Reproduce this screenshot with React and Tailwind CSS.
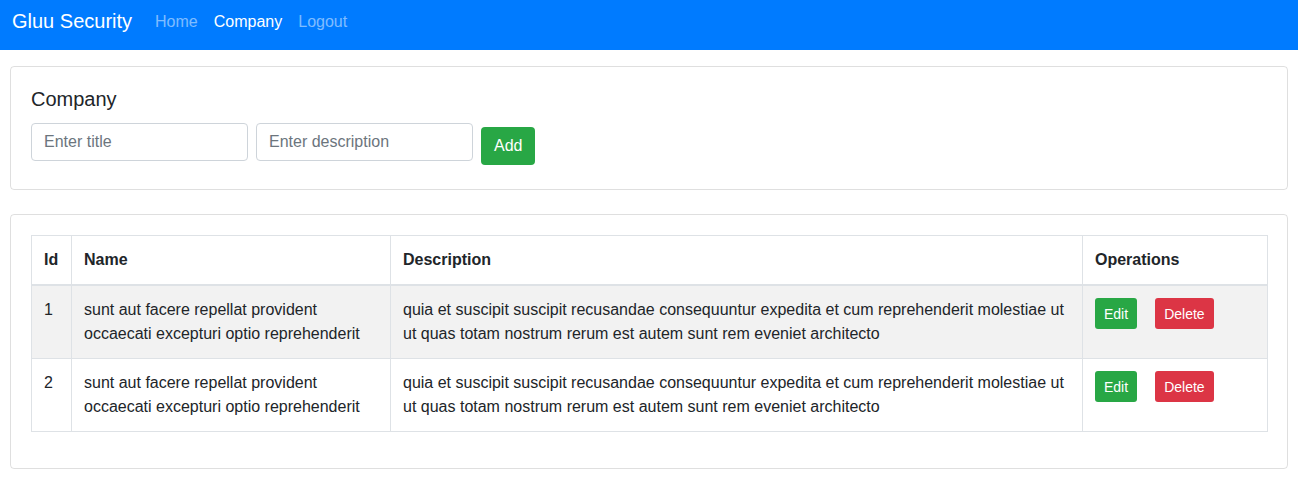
const rows = [
  {
    id: 1,
    name: "sunt aut facere repellat provident occaecati excepturi optio reprehenderit",
    description:
      "quia et suscipit suscipit recusandae consequuntur expedita et cum reprehenderit molestiae ut ut quas totam nostrum rerum est autem sunt rem eveniet architecto",
  },
  {
    id: 2,
    name: "sunt aut facere repellat provident occaecati excepturi optio reprehenderit",
    description:
      "quia et suscipit suscipit recusandae consequuntur expedita et cum reprehenderit molestiae ut ut quas totam nostrum rerum est autem sunt rem eveniet architecto",
  },
];

function Navbar() {
  return (
    <nav className="h-[50px] bg-[#007bff] flex items-start px-[12px] pt-[6px]">
      <span className="text-[20px] leading-[30px] text-white mr-[15px]">Gluu Security</span>
      <a className="px-[8px] mt-[1px] text-[16px] leading-[30px] text-[rgba(255,255,255,0.5)]">Home</a>
      <a className="px-[8px] mt-[1px] text-[16px] leading-[30px] text-white">Company</a>
      <a className="px-[8px] mt-[1px] text-[16px] leading-[30px] text-[rgba(255,255,255,0.5)]">Logout</a>
    </nav>
  );
}

function AddForm() {
  return (
    <div className="border border-[rgba(0,0,0,0.125)] rounded-[4px] p-[20px]">
      <h5 className="text-[20px] leading-[24px] mb-[12px] text-[#212529]">Company</h5>
      <div className="flex items-start">
        <input
          placeholder="Enter title"
          className="w-[217px] h-[38px] px-[12px] border border-[#ced4da] rounded-[4px] text-[16px] text-[#495057] placeholder:text-[#6c757d] outline-none"
        />
        <input
          placeholder="Enter description"
          className="w-[217px] h-[38px] px-[12px] ml-[8px] border border-[#ced4da] rounded-[4px] text-[16px] text-[#495057] placeholder:text-[#6c757d] outline-none"
        />
        <button className="ml-[8px] my-[4px] h-[38px] px-[13px] bg-[#28a745] text-white text-[16px] rounded-[4px]">
          Add
        </button>
      </div>
    </div>
  );
}

function CompanyTable() {
  return (
    <div className="border border-[rgba(0,0,0,0.125)] rounded-[4px] p-[20px]">
      <table className="w-full table-fixed border-collapse text-[16px] leading-[24px] text-[#212529] mb-[16px]">
        <colgroup>
          <col className="w-[40px]" />
          <col className="w-[319px]" />
          <col className="w-[692px]" />
          <col className="w-[185px]" />
        </colgroup>
        <thead>
          <tr>
            <th className="text-left font-bold p-[12px] border border-[#dee2e6] border-b-2">Id</th>
            <th className="text-left font-bold p-[12px] border border-[#dee2e6] border-b-2">Name</th>
            <th className="text-left font-bold p-[12px] border border-[#dee2e6] border-b-2">Description</th>
            <th className="text-left font-bold p-[12px] border border-[#dee2e6] border-b-2">Operations</th>
          </tr>
        </thead>
        <tbody>
          {rows.map((r, i) => (
            <tr key={r.id} className={i % 2 === 0 ? "bg-[rgba(0,0,0,0.05)]" : ""}>
              <td className="align-top p-[12px] border border-[#dee2e6]">{r.id}</td>
              <td className="align-top p-[12px] border border-[#dee2e6]">{r.name}</td>
              <td className="align-top p-[12px] border border-[#dee2e6]">{r.description}</td>
              <td className="align-top p-[12px] border border-[#dee2e6]">
                <div className="flex">
                  <button className="h-[31px] px-[9px] bg-[#28a745] text-white text-[14px] rounded-[3px]">
                    Edit
                  </button>
                  <button className="h-[31px] px-[9px] ml-[18px] bg-[#dc3545] text-white text-[14px] rounded-[3px]">
                    Delete
                  </button>
                </div>
              </td>
            </tr>
          ))}
        </tbody>
      </table>
    </div>
  );
}

export default function App() {
  return (
    <div className="min-h-[503px] bg-white font-['Liberation_Sans',Arial,sans-serif] text-[#212529]">
      <Navbar />
      <div className="px-[10px] pt-[16px] flex flex-col gap-[24px]">
        <AddForm />
        <CompanyTable />
      </div>
    </div>
  );
}
